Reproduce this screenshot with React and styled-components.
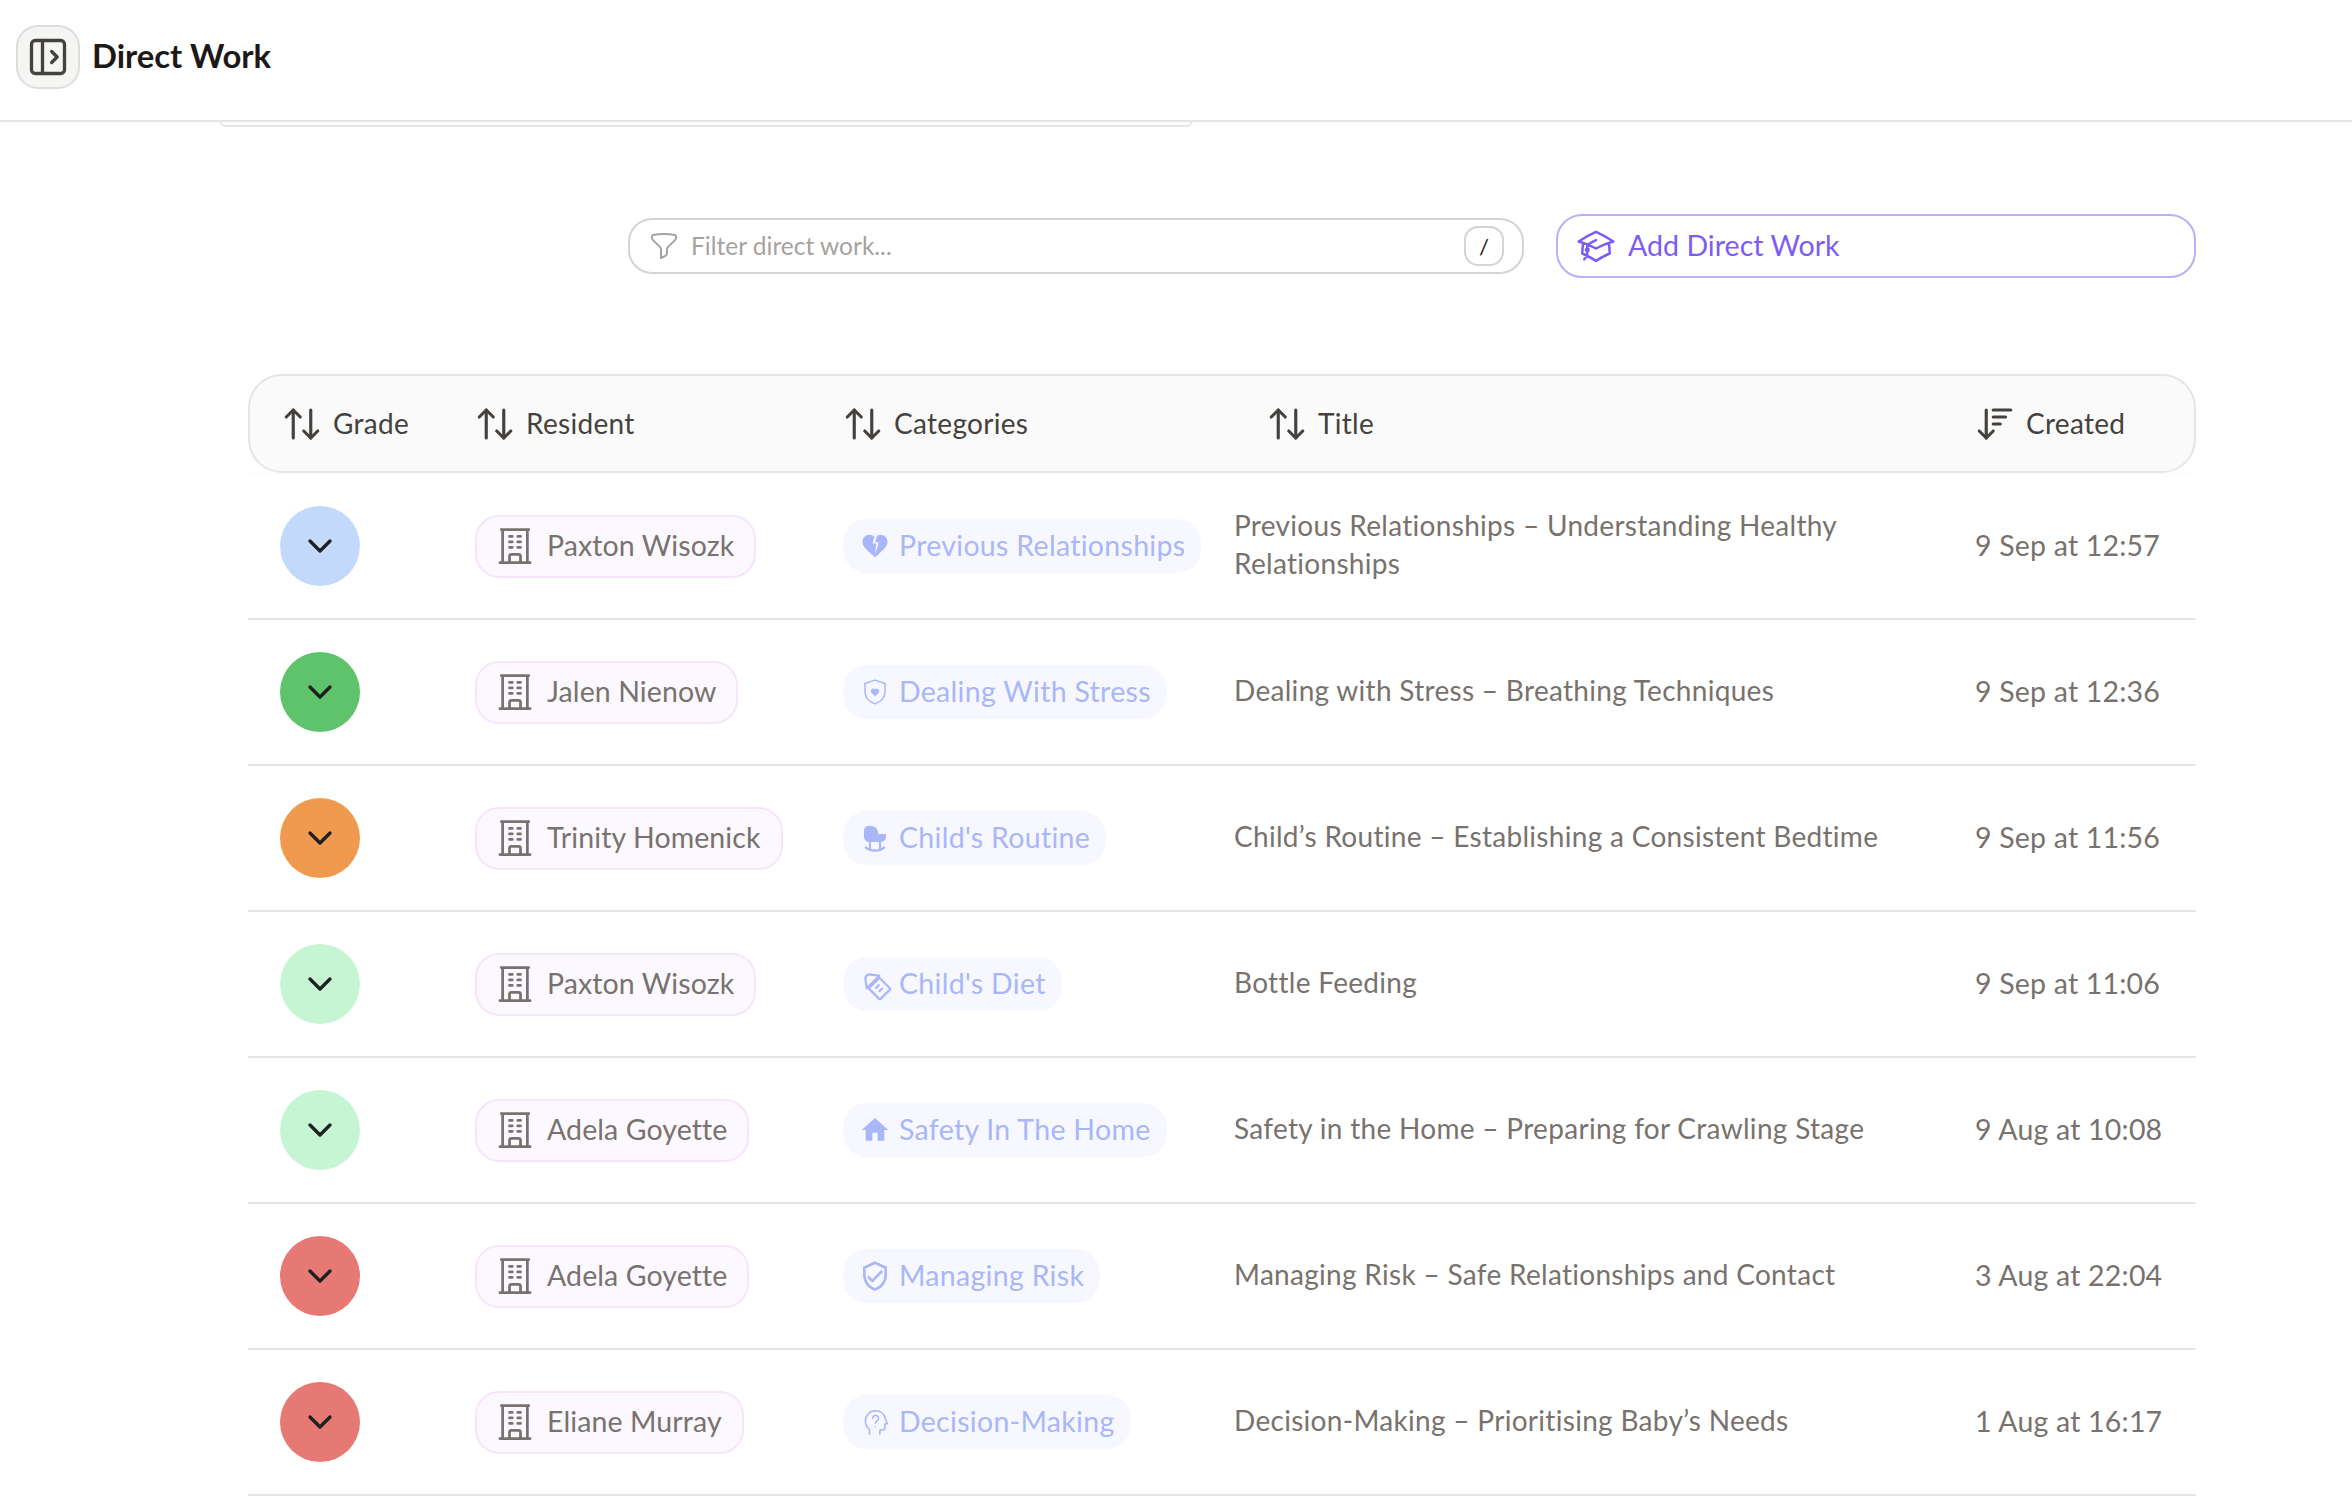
import React from "react";
import styled, { createGlobalStyle } from "styled-components";
import { ArrowUpDown, ArrowDownWideNarrow, ChevronDown, PanelLeftOpen } from "lucide-react";
import { HiOutlineBuildingOffice, HiOutlineAcademicCap, HiOutlineFunnel } from "react-icons/hi2";
import { MdHeartBroken, MdHome, MdOutlineVerifiedUser } from "react-icons/md";

const GlobalStyle = createGlobalStyle`
  html, body {
    margin: 0;
    padding: 0;
    background: #fff;
    overflow: hidden;
  }
  body {
    font-family: Lato, "Open Sans", sans-serif;
    color: #45413d;
  }
`;

const TopBar = styled.header`
  height: 122px;
  box-sizing: border-box;
  border-bottom: 2px solid #e5e5e4;
  display: flex;
  align-items: center;
  padding: 0 16px 6px;
  gap: 12px;
`;

const ToggleBtn = styled.button`
  width: 64px;
  height: 64px;
  padding: 0;
  border: 2px solid #dedddc;
  border-radius: 22px;
  background: #f5f5f4;
  color: #45413d;
  display: flex;
  align-items: center;
  justify-content: center;
`;

const PageTitle = styled.h1`
  margin: 0;
  padding-bottom: 4px;
  font-size: 32.8px;
  font-weight: 700;
  color: #1c1917;
`;

const CutCard = styled.div`
  width: 968px;
  height: 3px;
  margin-left: 220px;
  border: 2px solid #e5e5e4;
  border-top: 0;
  border-radius: 0 0 22px 22px;
`;

const Toolbar = styled.div`
  margin: 87px 156px 0 0;
  display: flex;
  justify-content: flex-end;
  align-items: center;
  gap: 32px;
`;

const FilterBox = styled.div`
  width: 896px;
  height: 56px;
  box-sizing: border-box;
  border: 2px solid #d4d4d3;
  border-radius: 24px;
  padding: 0 18px;
  display: flex;
  align-items: center;
  gap: 11px;
  color: #a8a29e;
  font-size: 24.5px;
`;

const FilterText = styled.span`
  flex: 1;
  padding-bottom: 2px;
`;

const Kbd = styled.span`
  width: 40px;
  height: 40px;
  box-sizing: border-box;
  border: 2px solid #d4d4d3;
  border-radius: 14px;
  color: #1c1917;
  font-size: 22px;
  display: flex;
  align-items: center;
  justify-content: center;
`;

const AddBtn = styled.button`
  width: 640px;
  height: 64px;
  box-sizing: border-box;
  border: 2px solid #bfaef7;
  border-radius: 26px;
  background: #fff;
  color: #7c5cf2;
  padding: 0 18px;
  display: flex;
  align-items: center;
  gap: 12px;
  font-family: inherit;
  font-size: 28.6px;
`;

const Table = styled.div`
  width: 1948px;
  margin: 96px 0 0 248px;
`;

const cols = "227px 368px 391px 741px 221px";

const HeadWrap = styled.div`
  border-bottom: 1px solid #f9f9f8;
`;

const HeadRow = styled.div`
  height: 99px;
  box-sizing: border-box;
  border: 2px solid #e5e5e4;
  border-radius: 34px;
  background: #fafafa;
  display: grid;
  grid-template-columns: ${cols};
  align-items: center;
`;

const HeadCell = styled.div`
  display: flex;
  align-items: center;
  gap: 10px;
  font-size: 28px;
  letter-spacing: 0.3px;
  color: #45413d;
  margin-left: ${(p) => p.$inset}px;
`;

const Row = styled.div`
  height: 146px;
  box-sizing: border-box;
  border-bottom: 2px solid #e5e5e4;
  display: grid;
  grid-template-columns: ${cols};
  align-items: center;
`;

const GradeBtn = styled.div`
  width: 80px;
  height: 80px;
  margin-left: 32px;
  border-radius: 50%;
  background: ${(p) => p.$color};
  color: #1f1f1f;
  display: flex;
  align-items: center;
  justify-content: center;
`;

const ResidentPill = styled.div`
  justify-self: start;
  height: 63px;
  box-sizing: border-box;
  border: 2px solid #f6e5fb;
  border-radius: 24px;
  background: #fcf8ff;
  color: #78726e;
  padding: 0 20px 0 16px;
  display: flex;
  align-items: center;
  gap: 10px;
  font-size: 28.5px;
  letter-spacing: 0.1px;
`;

const CategoryPill = styled.div`
  justify-self: start;
  height: 54px;
  border-radius: 24px;
  background: #f7f8ff;
  color: #a9b6f8;
  padding: 0 16px 0 17px;
  display: flex;
  align-items: center;
  gap: 9px;
  font-size: 28.5px;
  letter-spacing: 0.3px;
`;

const Label = styled.span`
  padding-bottom: 3px;
`;

const HeadLabel = styled.span`
  padding-bottom: 2px;
`;

const IconSlot = styled.span`
  width: 30px;
  height: 30px;
  display: flex;
  align-items: center;
  justify-content: center;
  svg {
    flex-shrink: 0;
  }
`;

const TitleText = styled.div`
  font-size: 28px;
  letter-spacing: 0.3px;
  line-height: 38px;
  color: #78726e;
  padding-bottom: 5px;
  max-width: 660px;
`;

const DateText = styled.div`
  font-size: 28.5px;
  letter-spacing: 0.2px;
  color: #78726e;
  padding-bottom: 3px;
`;

const ShieldHeart = () => (
  <svg viewBox="0 0 24 24" width="30" height="30" fill="none" stroke="currentColor" strokeWidth="1.2">
    <path d="M12 2.5 20 5.2v6.3c0 4.8-3.3 8.2-8 10-4.7-1.8-8-5.2-8-10V5.2Z" strokeLinejoin="round" />
    <path d="M12 15.6 8.9 12.4a2 2 0 0 1 3.1-2.5 2 2 0 0 1 3.1 2.5Z" fill="currentColor" stroke="none" />
  </svg>
);

const Cradle = () => (
  <svg viewBox="0 0 24 24" width="30" height="30" fill="currentColor" stroke="currentColor" strokeWidth="0">
    <path d="M3.2 6c0-2 1.5-3.6 3.6-3.6H9c3 0 5.4 2.4 5.4 5v1.4h6.4V11c0 2.3-1.9 4.2-4.2 4.2H7.4c-2.3 0-4.2-1.9-4.2-4.2Z" />
    <path d="M8 15v6M16 15v6M4.5 19.5c4 3.5 11 3.5 15 0" fill="none" strokeWidth="1.7" strokeLinecap="round" />
  </svg>
);

const Bottle = () => (
  <svg viewBox="0 0 24 24" width="33" height="33" fill="none" stroke="currentColor" strokeWidth="1.6" strokeLinejoin="round">
    <g transform="rotate(-45 12 12)">
      <rect x="6.5" y="10.5" width="11" height="11.5" rx="1" />
      <path d="M5.5 9.5h13L14 3.6c-1-1-3-1-4 0Z" />
      <path d="M10 14h4M10 17.5h4" />
    </g>
  </svg>
);

const HeadQuestion = () => (
  <svg viewBox="0 0 24 24" width="29" height="29" fill="none" stroke="currentColor" strokeWidth="1.3" strokeLinecap="round" strokeLinejoin="round">
    <path d="M7 22v-4.4C4.9 16 3.6 13.5 3.6 10.8 3.6 6 7.4 2.3 12 2.3c4.1 0 7.2 2.6 8 6.2l1.8 4.6h-2v3.3c0 1-.9 1.8-2 1.8h-2.2V22" />
    <path d="M9.7 8.4a2.4 2.4 0 1 1 3.7 2.1c-.9.6-1.4 1.1-1.4 2.1" />
    <path d="M12 15.3v.1" />
  </svg>
);

const categoryIcons = {
  "Previous Relationships": <MdHeartBroken size={30} />,
  "Dealing With Stress": <ShieldHeart />,
  "Child's Routine": <Cradle />,
  "Child's Diet": <Bottle />,
  "Safety In The Home": <MdHome size={32} />,
  "Managing Risk": <MdOutlineVerifiedUser size={32} />,
  "Decision-Making": <HeadQuestion />,
};

const rows = [
  { grade: "#c3d9fb", resident: "Paxton Wisozk", category: "Previous Relationships", title: "Previous Relationships – Understanding Healthy Relationships", created: "9 Sep at 12:57" },
  { grade: "#5fc36c", resident: "Jalen Nienow", category: "Dealing With Stress", title: "Dealing with Stress – Breathing Techniques", created: "9 Sep at 12:36" },
  { grade: "#ef9a4e", resident: "Trinity Homenick", category: "Child's Routine", title: "Child’s Routine – Establishing a Consistent Bedtime", created: "9 Sep at 11:56" },
  { grade: "#c6f5d3", resident: "Paxton Wisozk", category: "Child's Diet", title: "Bottle Feeding", created: "9 Sep at 11:06" },
  { grade: "#c6f5d3", resident: "Adela Goyette", category: "Safety In The Home", title: "Safety in the Home – Preparing for Crawling Stage", created: "9 Aug at 10:08" },
  { grade: "#e77975", resident: "Adela Goyette", category: "Managing Risk", title: "Managing Risk – Safe Relationships and Contact", created: "3 Aug at 22:04" },
  { grade: "#e77975", resident: "Eliane Murray", category: "Decision-Making", title: "Decision-Making – Prioritising Baby’s Needs", created: "1 Aug at 16:17" },
];

const App = () => {
  return (
    <>
      <GlobalStyle />
      <TopBar>
        <ToggleBtn>
          <PanelLeftOpen size={44} strokeWidth={1.8} />
        </ToggleBtn>
        <PageTitle>Direct Work</PageTitle>
      </TopBar>
      <CutCard />
      <Toolbar>
        <FilterBox>
          <HiOutlineFunnel size={32} />
          <FilterText>Filter direct work...</FilterText>
          <Kbd>/</Kbd>
        </FilterBox>
        <AddBtn>
          <HiOutlineAcademicCap size={40} />
          <Label>Add Direct Work</Label>
        </AddBtn>
      </Toolbar>
      <Table>
        <HeadWrap>
          <HeadRow>
            <HeadCell $inset={31}><ArrowUpDown size={42} strokeWidth={1.8} /><HeadLabel>Grade</HeadLabel></HeadCell>
            <HeadCell $inset={-3}><ArrowUpDown size={42} strokeWidth={1.8} /><HeadLabel>Resident</HeadLabel></HeadCell>
            <HeadCell $inset={-3}><ArrowUpDown size={42} strokeWidth={1.8} /><HeadLabel>Categories</HeadLabel></HeadCell>
            <HeadCell $inset={30}><ArrowUpDown size={42} strokeWidth={1.8} /><HeadLabel>Title</HeadLabel></HeadCell>
            <HeadCell $inset={-3}><ArrowDownWideNarrow size={42} strokeWidth={1.8} /><HeadLabel>Created</HeadLabel></HeadCell>
          </HeadRow>
        </HeadWrap>
        {rows.map((r, i) => (
          <Row key={i}>
            <GradeBtn $color={r.grade}>
              <ChevronDown size={40} strokeWidth={2} />
            </GradeBtn>
            <ResidentPill>
              <HiOutlineBuildingOffice size={44} />
              <Label>{r.resident}</Label>
            </ResidentPill>
            <CategoryPill>
              <IconSlot>{categoryIcons[r.category]}</IconSlot>
              <Label>{r.category}</Label>
            </CategoryPill>
            <TitleText>{r.title}</TitleText>
            <DateText>{r.created}</DateText>
          </Row>
        ))}
      </Table>
    </>
  );
};

export default App;
